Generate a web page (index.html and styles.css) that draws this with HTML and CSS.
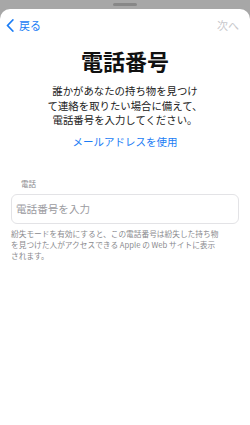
FILE: index.html
```html
<!DOCTYPE html>
<html lang="ja">
<head>
<meta charset="utf-8">
<link rel="stylesheet" href="styles.css">
</head>
<body>
<div class="grabber"></div>
<div class="sheet">
  <div class="nav">
    <div class="back">
      <svg class="chev" width="8" height="13" viewBox="0 0 8 13"><path d="M6.8 1 L1.5 6.5 L6.8 12" fill="none" stroke="#1a7cf5" stroke-width="1.8" stroke-linecap="round" stroke-linejoin="round"/></svg>
      <span>戻る</span>
    </div>
    <div class="next">次へ</div>
  </div>
  <h1 class="title">電話番号</h1>
  <p class="desc">誰かがあなたの持ち物を見つけ<br>て連絡を取りたい場合に備えて、<br>電話番号を入力してください。</p>
  <div class="link">メールアドレスを使用</div>
  <div class="field">
    <div class="label">電話</div>
    <div class="input">電話番号を入力</div>
    <p class="note">紛失モードを有効にすると、この電話番号は紛失した持ち物<br>を見つけた人がアクセスできる Apple の Web サイトに表示<br>されます。</p>
  </div>
</div>
</body>
</html>
```
FILE: styles.css
```css
html, body {
  margin: 0;
  padding: 0;
  height: 100%;
}
body {
  background: #a7a7a7;
  font-family: "Noto Sans CJK JP", "Noto Sans", sans-serif;
  overflow: hidden;
}
.grabber {
  position: absolute;
  top: 3px;
  left: 113px;
  width: 24px;
  height: 3px;
  border-radius: 2px;
  background: #878787;
}
.sheet {
  margin-top: 9px;
  height: calc(100% - 9px);
  background: #ffffff;
  border-radius: 10px 10px 0 0;
}
.nav {
  height: 32px;
  display: flex;
  align-items: center;
  justify-content: space-between;
  padding: 0 11px 0 6px;
}
.back {
  display: flex;
  align-items: center;
  gap: 5px;
  color: #1a7cf5;
  font-size: 11px;
  line-height: 14px;
}
.chev {
  display: block;
}
.next {
  color: #c8c8cc;
  font-size: 11px;
  line-height: 14px;
}
.title {
  margin: 5px 0 0;
  text-align: center;
  font-size: 22px;
  line-height: 28px;
  font-weight: 700;
  color: #111111;
}
.desc {
  margin: 10px 0 0;
  text-align: center;
  font-size: 10.4px;
  line-height: 14.5px;
  color: #222222;
}
.link {
  margin-top: 7px;
  text-align: center;
  font-size: 10.5px;
  line-height: 14px;
  color: #1a7cf5;
}
.field {
  padding: 0 11px;
  margin-top: 30px;
}
.label {
  padding-left: 10px;
  font-size: 7.5px;
  line-height: 10px;
  color: #8a8a8e;
}
.input {
  margin-top: 5px;
  height: 30px;
  box-sizing: border-box;
  border: 1px solid #e3e3e6;
  border-radius: 6px;
  padding: 0 4px;
  display: flex;
  align-items: center;
  font-size: 10.6px;
  color: #9b9b9f;
}
.note {
  margin: 4px 0 0;
  font-size: 7.7px;
  line-height: 11px;
  color: #8a8a8e;
  white-space: nowrap;
}
```
